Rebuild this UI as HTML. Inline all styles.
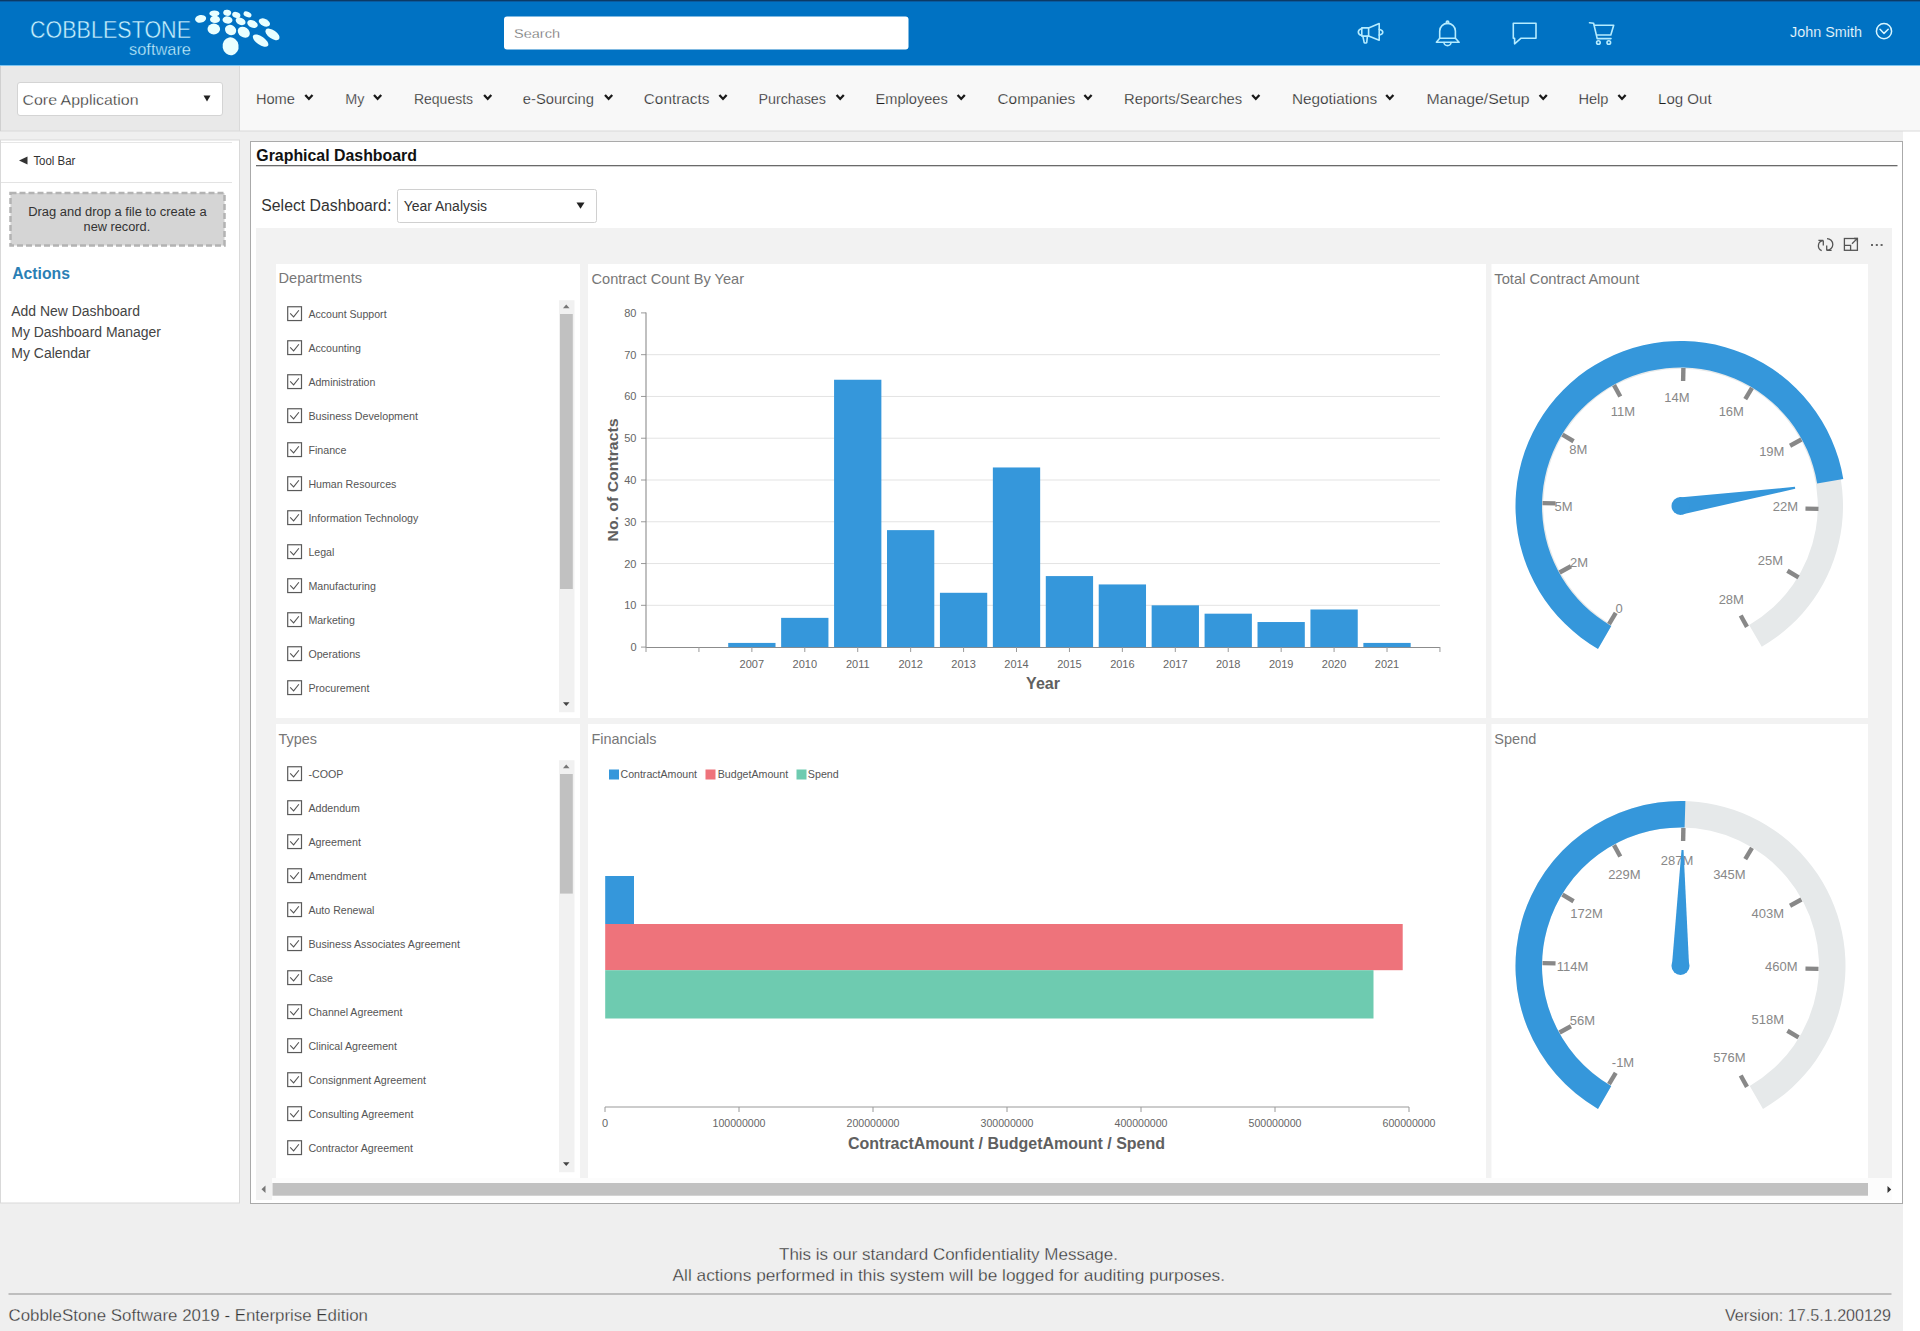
<!DOCTYPE html>
<html><head><meta charset="utf-8"><title>Graphical Dashboard</title>
<style>
html,body{margin:0;padding:0;width:1920px;height:1331px;overflow:hidden;background:#fff;}
svg{position:absolute;left:0;top:0;display:block;font-family:"Liberation Sans",sans-serif;}
</style></head><body>
<svg width="1920" height="1331" viewBox="0 0 1920 1331">
<rect x="0" y="0" width="1920" height="1331" fill="#ffffff"/>
<rect x="0" y="66" width="1903" height="1265" fill="#efefef"/>
<rect x="0" y="0" width="1920" height="66" fill="#0072c3"/>
<rect x="0" y="0" width="1920" height="1" fill="#0b3a66"/>
<rect x="0" y="1" width="1920" height="1" fill="#0a5a9e"/>
<rect x="0" y="65" width="1920" height="1" fill="#7cc4f0"/>
<text x="30" y="37.5" font-size="23.5" fill="#c9f3ff" textLength="161" lengthAdjust="spacingAndGlyphs" stroke="#0072c3" stroke-width="0.45">COBBLESTONE</text>
<text x="129" y="55" font-size="17" fill="#c9f3ff" textLength="62" lengthAdjust="spacingAndGlyphs" stroke="#0072c3" stroke-width="0.35">software</text>
<ellipse cx="200.6" cy="18.8" rx="5.6" ry="3.8" fill="#e9ffff" transform="rotate(-10 200.6 18.8)"/>
<ellipse cx="214.4" cy="13.4" rx="5.0" ry="3.0" fill="#e9ffff" transform="rotate(0 214.4 13.4)"/>
<ellipse cx="215.0" cy="19.4" rx="5.0" ry="3.6" fill="#e9ffff" transform="rotate(0 215.0 19.4)"/>
<ellipse cx="213.8" cy="29.0" rx="6.3" ry="5.4" fill="#e9ffff" transform="rotate(0 213.8 29.0)"/>
<ellipse cx="227.2" cy="12.8" rx="4.0" ry="3.0" fill="#e9ffff" transform="rotate(10 227.2 12.8)"/>
<ellipse cx="227.5" cy="20.0" rx="5.0" ry="3.6" fill="#e9ffff" transform="rotate(10 227.5 20.0)"/>
<ellipse cx="230.6" cy="30.0" rx="5.8" ry="5.0" fill="#e9ffff" transform="rotate(30 230.6 30.0)"/>
<ellipse cx="230.6" cy="46.3" rx="8.0" ry="9.0" fill="#e9ffff" transform="rotate(-10 230.6 46.3)"/>
<ellipse cx="236.3" cy="15.0" rx="4.2" ry="3.0" fill="#e9ffff" transform="rotate(20 236.3 15.0)"/>
<ellipse cx="240.6" cy="21.3" rx="5.2" ry="3.5" fill="#e9ffff" transform="rotate(25 240.6 21.3)"/>
<ellipse cx="243.8" cy="32.2" rx="6.5" ry="5.0" fill="#e9ffff" transform="rotate(35 243.8 32.2)"/>
<ellipse cx="247.5" cy="14.4" rx="4.2" ry="2.6" fill="#e9ffff" transform="rotate(25 247.5 14.4)"/>
<ellipse cx="252.5" cy="24.0" rx="5.5" ry="3.6" fill="#e9ffff" transform="rotate(25 252.5 24.0)"/>
<ellipse cx="260.6" cy="40.6" rx="9.0" ry="4.2" fill="#e9ffff" transform="rotate(35 260.6 40.6)"/>
<ellipse cx="264.4" cy="22.5" rx="6.0" ry="3.6" fill="#e9ffff" transform="rotate(25 264.4 22.5)"/>
<ellipse cx="272.5" cy="34.4" rx="8.2" ry="4.2" fill="#e9ffff" transform="rotate(35 272.5 34.4)"/>
<rect x="504" y="16.5" width="404.5" height="33" rx="3" fill="#ffffff"/>
<text x="514" y="38" font-size="13" fill="#5e5e5e" textLength="46" lengthAdjust="spacingAndGlyphs" stroke="#ffffff" stroke-width="0.3">Search</text>
<g fill="none" stroke="#b5ecff" stroke-width="1.6" stroke-linejoin="round" stroke-linecap="round"><path d="M1368.6 27.9 L1379.2 23.6 L1379.2 40.3 L1368.6 36.1 Z"/><path d="M1368.6 27.9 L1361.8 27.9 L1361.8 36.1 L1368.6 36.1"/><path d="M1361.8 28.4 Q1358.3 29.5 1358.3 32 Q1358.3 34.6 1361.8 35.6"/><path d="M1379.2 29.3 Q1382.8 30.3 1382.8 32.2 Q1382.8 34.2 1379.2 35"/><path d="M1362.9 36.3 L1364.2 42.6 Q1365.4 43.5 1366.7 42.6 L1367.4 36.3"/><path d="M1439.7 38.3 L1439.7 31 A7.85 7.6 0 0 1 1455.4 31 L1455.4 38.3"/><path d="M1439.7 38.3 L1455.4 38.3 L1459.1 42.3 L1436.4 42.3 Z"/><path d="M1444 42.5 A3.5 3.1 0 0 0 1451 42.5"/><circle cx="1447.5" cy="22.3" r="1.2"/><path d="M1513.3 23.3 L1536 23.3 L1536 38.3 L1520.8 38.3 L1514.6 43.8 L1514.6 38.3 L1513.3 38.3 Z"/><path d="M1589.5 22.8 L1593.6 23.2 L1597.2 38.6 L1611 38.6"/><path d="M1594.6 25.2 L1613.7 25.2 L1610.8 35 L1596.8 35"/><circle cx="1598.4" cy="42.5" r="1.8"/><circle cx="1608.8" cy="42.5" r="1.8"/><circle cx="1884" cy="31.2" r="7.6" stroke="#d8f6ff" stroke-width="1.5"/><path d="M1880 29.2 L1884 33.4 L1888.2 29.2" stroke="#d8f6ff" stroke-width="1.5"/></g>
<text x="1790" y="36.6" font-size="14" fill="#f0fcff" textLength="72" lengthAdjust="spacingAndGlyphs" stroke="#0072c3" stroke-width="0.15">John Smith</text>
<rect x="0" y="66" width="1920" height="65" fill="#f8f8f8"/>
<rect x="0" y="66" width="239.5" height="65" fill="#e9e9e9"/>
<rect x="239" y="66" width="1" height="65" fill="#dadada"/>
<rect x="0" y="130.5" width="1920" height="1" fill="#d9d9d9"/>
<rect x="0" y="66" width="1" height="65" fill="#d0d0d0"/>
<rect x="17.5" y="82.5" width="205" height="33" rx="2.5" fill="#ffffff" stroke="#d4d4d4" stroke-width="1"/>
<text x="22.5" y="104.5" font-size="15" fill="#2a2a2a" textLength="116" lengthAdjust="spacingAndGlyphs" stroke="#ffffff" stroke-width="0.3">Core Application</text>
<path d="M203.5 95.5 L210.5 95.5 L207 101.5 Z" fill="#222"/>
<text x="255.9" y="103.8" font-size="14" fill="#1e1e1e" textLength="39.0" lengthAdjust="spacingAndGlyphs" stroke="#f8f8f8" stroke-width="0.25">Home</text>
<path d="M305.3 94.9 L308.9 98.9 L312.5 94.9" fill="none" stroke="#1a1a1a" stroke-width="2.3"/>
<text x="345.3" y="103.8" font-size="14" fill="#1e1e1e" textLength="19.2" lengthAdjust="spacingAndGlyphs" stroke="#f8f8f8" stroke-width="0.25">My</text>
<path d="M374.0 94.9 L377.59999999999997 98.9 L381.2 94.9" fill="none" stroke="#1a1a1a" stroke-width="2.3"/>
<text x="414.0" y="103.8" font-size="14" fill="#1e1e1e" textLength="59.0" lengthAdjust="spacingAndGlyphs" stroke="#f8f8f8" stroke-width="0.25">Requests</text>
<path d="M484.1 94.9 L487.7 98.9 L491.3 94.9" fill="none" stroke="#1a1a1a" stroke-width="2.3"/>
<text x="522.8" y="103.8" font-size="14" fill="#1e1e1e" textLength="71.2" lengthAdjust="spacingAndGlyphs" stroke="#f8f8f8" stroke-width="0.25">e-Sourcing</text>
<path d="M605.0 94.9 L608.6 98.9 L612.1999999999999 94.9" fill="none" stroke="#1a1a1a" stroke-width="2.3"/>
<text x="643.8" y="103.8" font-size="14" fill="#1e1e1e" textLength="65.6" lengthAdjust="spacingAndGlyphs" stroke="#f8f8f8" stroke-width="0.25">Contracts</text>
<path d="M719.4 94.9 L723.0 98.9 L726.5999999999999 94.9" fill="none" stroke="#1a1a1a" stroke-width="2.3"/>
<text x="758.4" y="103.8" font-size="14" fill="#1e1e1e" textLength="67.6" lengthAdjust="spacingAndGlyphs" stroke="#f8f8f8" stroke-width="0.25">Purchases</text>
<path d="M836.6 94.9 L840.2 98.9 L843.8 94.9" fill="none" stroke="#1a1a1a" stroke-width="2.3"/>
<text x="875.6" y="103.8" font-size="14" fill="#1e1e1e" textLength="72.2" lengthAdjust="spacingAndGlyphs" stroke="#f8f8f8" stroke-width="0.25">Employees</text>
<path d="M957.6 94.9 L961.2 98.9 L964.8 94.9" fill="none" stroke="#1a1a1a" stroke-width="2.3"/>
<text x="997.5" y="103.8" font-size="14" fill="#1e1e1e" textLength="77.8" lengthAdjust="spacingAndGlyphs" stroke="#f8f8f8" stroke-width="0.25">Companies</text>
<path d="M1084.3999999999999 94.9 L1088.0 98.9 L1091.6 94.9" fill="none" stroke="#1a1a1a" stroke-width="2.3"/>
<text x="1124.0" y="103.8" font-size="14" fill="#1e1e1e" textLength="118.2" lengthAdjust="spacingAndGlyphs" stroke="#f8f8f8" stroke-width="0.25">Reports/Searches</text>
<path d="M1252.1999999999998 94.9 L1255.8 98.9 L1259.3999999999999 94.9" fill="none" stroke="#1a1a1a" stroke-width="2.3"/>
<text x="1291.9" y="103.8" font-size="14" fill="#1e1e1e" textLength="85.3" lengthAdjust="spacingAndGlyphs" stroke="#f8f8f8" stroke-width="0.25">Negotiations</text>
<path d="M1386.1999999999998 94.9 L1389.8 98.9 L1393.3999999999999 94.9" fill="none" stroke="#1a1a1a" stroke-width="2.3"/>
<text x="1426.6" y="103.8" font-size="14" fill="#1e1e1e" textLength="103.1" lengthAdjust="spacingAndGlyphs" stroke="#f8f8f8" stroke-width="0.25">Manage/Setup</text>
<path d="M1539.6 94.9 L1543.2 98.9 L1546.8 94.9" fill="none" stroke="#1a1a1a" stroke-width="2.3"/>
<text x="1578.4" y="103.8" font-size="14" fill="#1e1e1e" textLength="30.0" lengthAdjust="spacingAndGlyphs" stroke="#f8f8f8" stroke-width="0.25">Help</text>
<path d="M1618.3999999999999 94.9 L1622.0 98.9 L1625.6 94.9" fill="none" stroke="#1a1a1a" stroke-width="2.3"/>
<text x="1658.0" y="103.8" font-size="14" fill="#1e1e1e" textLength="53.6" lengthAdjust="spacingAndGlyphs" stroke="#f8f8f8" stroke-width="0.25">Log Out</text>
<rect x="0.5" y="140" width="239" height="1063" fill="#ffffff" stroke="#d9d9d9" stroke-width="1"/>
<rect x="1" y="142" width="231" height="1" fill="#e6e6e6"/>
<rect x="1" y="182" width="231" height="1" fill="#e3e3e3"/>
<path d="M19 160.5 L27.5 156.5 L27.5 164.5 Z" fill="#333"/>
<text x="33.4" y="165" font-size="12" fill="#333333" textLength="42" lengthAdjust="spacingAndGlyphs">Tool Bar</text>
<rect x="10.5" y="193" width="214" height="52.5" fill="#d5d5d5" stroke="#b3b3b3" stroke-width="2.5" stroke-dasharray="6 3"/>
<text x="28.2" y="216" font-size="12" fill="#333333" textLength="178.4" lengthAdjust="spacingAndGlyphs">Drag and drop a file to create a</text>
<text x="83.6" y="230.6" font-size="12" fill="#333333" textLength="66.6" lengthAdjust="spacingAndGlyphs">new record.</text>
<text x="12.2" y="279.3" font-size="16" fill="#2b7fb5" font-weight="bold" textLength="57.7" lengthAdjust="spacingAndGlyphs">Actions</text>
<text x="11.3" y="315.9" font-size="14" fill="#444444" textLength="128.7" lengthAdjust="spacingAndGlyphs">Add New Dashboard</text>
<text x="11.3" y="336.9" font-size="14" fill="#444444" textLength="149.7" lengthAdjust="spacingAndGlyphs">My Dashboard Manager</text>
<text x="11.3" y="357.9" font-size="14" fill="#444444" textLength="79.2" lengthAdjust="spacingAndGlyphs">My Calendar</text>
<rect x="250.5" y="141.5" width="1652" height="1062" fill="#ffffff" stroke="#aaaaaa" stroke-width="1"/>
<text x="256.3" y="161.3" font-size="16" fill="#111111" font-weight="bold" textLength="160.7" lengthAdjust="spacingAndGlyphs">Graphical Dashboard</text>
<rect x="256" y="165" width="1641.5" height="1.3" fill="#6a6a6a"/>
<text x="261.3" y="210.5" font-size="16" fill="#333333" textLength="130" lengthAdjust="spacingAndGlyphs">Select Dashboard:</text>
<rect x="397.5" y="189.5" width="199" height="33" rx="2" fill="#ffffff" stroke="#d0d0d0" stroke-width="1"/>
<text x="403.8" y="211.3" font-size="14" fill="#333333" textLength="83.2" lengthAdjust="spacingAndGlyphs">Year Analysis</text>
<path d="M576.5 202.5 L584.5 202.5 L580.5 208.8 Z" fill="#222"/>
<rect x="256" y="228" width="1636" height="972" fill="#f2f2f2"/>
<g fill="none" stroke="#555" stroke-width="1.3"><path d="M1823.3 240.4 L1818.4 240.4 M1823.3 240.4 L1823.3 245.4"/><path d="M1823.0 240.6 A5.2 5.2 0 0 0 1821.7 250.6"/><path d="M1826.7 250.4 L1831.6 250.4 M1826.7 250.4 L1826.7 245.4"/><path d="M1827.0 238.6 A5.2 5.2 0 0 1 1827.0 250.2"/><rect x="1844.4" y="238.5" width="13" height="11.8"/><path d="M1844.4 245.4 L1850.6 245.4 L1850.6 250.3"/><path d="M1852 243.8 L1857.2 238.6 M1854 238.5 L1857.4 238.5 L1857.4 241.8"/></g>
<rect x="1871" y="244" width="2" height="2" fill="#666"/>
<rect x="1875.8" y="244" width="2" height="2" fill="#666"/>
<rect x="1880.6" y="244" width="2" height="2" fill="#666"/>
<rect x="276" y="264" width="304" height="454" fill="#ffffff"/>
<rect x="588" y="264" width="898" height="454" fill="#ffffff"/>
<rect x="1491.5" y="264" width="376.5" height="454" fill="#ffffff"/>
<rect x="276" y="724" width="304" height="454" fill="#ffffff"/>
<rect x="588" y="724" width="898" height="454" fill="#ffffff"/>
<rect x="1491.5" y="724" width="376.5" height="454" fill="#ffffff"/>
<text x="278.5" y="282.7" font-size="15" fill="#777777" textLength="83.5" lengthAdjust="spacingAndGlyphs">Departments</text>
<text x="591.5" y="283.5" font-size="15" fill="#777777" textLength="152.5" lengthAdjust="spacingAndGlyphs">Contract Count By Year</text>
<text x="1494.3" y="283.5" font-size="15" fill="#777777" textLength="145" lengthAdjust="spacingAndGlyphs">Total Contract Amount</text>
<text x="278.5" y="743.5" font-size="15" fill="#777777" textLength="38.5" lengthAdjust="spacingAndGlyphs">Types</text>
<text x="591.5" y="743.7" font-size="15" fill="#777777" textLength="65" lengthAdjust="spacingAndGlyphs">Financials</text>
<text x="1494.3" y="743.7" font-size="15" fill="#777777" textLength="42" lengthAdjust="spacingAndGlyphs">Spend</text>
<rect x="287.7" y="306.75" width="13.8" height="13.8" fill="#fff" stroke="#5a5a5a" stroke-width="1.2"/>
<path d="M290.2 313.45 L293.6 316.85 L298.9 310.25" fill="none" stroke="#555" stroke-width="1.1"/>
<text x="308.4" y="317.85" font-size="11" fill="#555555" textLength="78.2" lengthAdjust="spacingAndGlyphs">Account Support</text>
<rect x="287.7" y="340.75" width="13.8" height="13.8" fill="#fff" stroke="#5a5a5a" stroke-width="1.2"/>
<path d="M290.2 347.45 L293.6 350.85 L298.9 344.25" fill="none" stroke="#555" stroke-width="1.1"/>
<text x="308.4" y="351.85" font-size="11" fill="#555555" textLength="52.5" lengthAdjust="spacingAndGlyphs">Accounting</text>
<rect x="287.7" y="374.75" width="13.8" height="13.8" fill="#fff" stroke="#5a5a5a" stroke-width="1.2"/>
<path d="M290.2 381.45 L293.6 384.85 L298.9 378.25" fill="none" stroke="#555" stroke-width="1.1"/>
<text x="308.4" y="385.85" font-size="11" fill="#555555" textLength="67" lengthAdjust="spacingAndGlyphs">Administration</text>
<rect x="287.7" y="408.75" width="13.8" height="13.8" fill="#fff" stroke="#5a5a5a" stroke-width="1.2"/>
<path d="M290.2 415.45 L293.6 418.85 L298.9 412.25" fill="none" stroke="#555" stroke-width="1.1"/>
<text x="308.4" y="419.85" font-size="11" fill="#555555" textLength="109.5" lengthAdjust="spacingAndGlyphs">Business Development</text>
<rect x="287.7" y="442.75" width="13.8" height="13.8" fill="#fff" stroke="#5a5a5a" stroke-width="1.2"/>
<path d="M290.2 449.45 L293.6 452.85 L298.9 446.25" fill="none" stroke="#555" stroke-width="1.1"/>
<text x="308.4" y="453.85" font-size="11" fill="#555555" textLength="38" lengthAdjust="spacingAndGlyphs">Finance</text>
<rect x="287.7" y="476.75" width="13.8" height="13.8" fill="#fff" stroke="#5a5a5a" stroke-width="1.2"/>
<path d="M290.2 483.45 L293.6 486.85 L298.9 480.25" fill="none" stroke="#555" stroke-width="1.1"/>
<text x="308.4" y="487.85" font-size="11" fill="#555555" textLength="88" lengthAdjust="spacingAndGlyphs">Human Resources</text>
<rect x="287.7" y="510.75" width="13.8" height="13.8" fill="#fff" stroke="#5a5a5a" stroke-width="1.2"/>
<path d="M290.2 517.45 L293.6 520.85 L298.9 514.25" fill="none" stroke="#555" stroke-width="1.1"/>
<text x="308.4" y="521.85" font-size="11" fill="#555555" textLength="110" lengthAdjust="spacingAndGlyphs">Information Technology</text>
<rect x="287.7" y="544.75" width="13.8" height="13.8" fill="#fff" stroke="#5a5a5a" stroke-width="1.2"/>
<path d="M290.2 551.45 L293.6 554.85 L298.9 548.25" fill="none" stroke="#555" stroke-width="1.1"/>
<text x="308.4" y="555.85" font-size="11" fill="#555555" textLength="26" lengthAdjust="spacingAndGlyphs">Legal</text>
<rect x="287.7" y="578.75" width="13.8" height="13.8" fill="#fff" stroke="#5a5a5a" stroke-width="1.2"/>
<path d="M290.2 585.45 L293.6 588.85 L298.9 582.25" fill="none" stroke="#555" stroke-width="1.1"/>
<text x="308.4" y="589.85" font-size="11" fill="#555555" textLength="67.5" lengthAdjust="spacingAndGlyphs">Manufacturing</text>
<rect x="287.7" y="612.75" width="13.8" height="13.8" fill="#fff" stroke="#5a5a5a" stroke-width="1.2"/>
<path d="M290.2 619.45 L293.6 622.85 L298.9 616.25" fill="none" stroke="#555" stroke-width="1.1"/>
<text x="308.4" y="623.85" font-size="11" fill="#555555" textLength="46.5" lengthAdjust="spacingAndGlyphs">Marketing</text>
<rect x="287.7" y="646.75" width="13.8" height="13.8" fill="#fff" stroke="#5a5a5a" stroke-width="1.2"/>
<path d="M290.2 653.45 L293.6 656.85 L298.9 650.25" fill="none" stroke="#555" stroke-width="1.1"/>
<text x="308.4" y="657.85" font-size="11" fill="#555555" textLength="52" lengthAdjust="spacingAndGlyphs">Operations</text>
<rect x="287.7" y="680.75" width="13.8" height="13.8" fill="#fff" stroke="#5a5a5a" stroke-width="1.2"/>
<path d="M290.2 687.45 L293.6 690.85 L298.9 684.25" fill="none" stroke="#555" stroke-width="1.1"/>
<text x="308.4" y="691.85" font-size="11" fill="#555555" textLength="61" lengthAdjust="spacingAndGlyphs">Procurement</text>
<rect x="559" y="300.25" width="15.5" height="412" fill="#f1f1f1"/>
<path d="M563 308.25 L569.5 308.25 L566.25 304.45 Z" fill="#777"/>
<path d="M563 702.25 L569.5 702.25 L566.25 706.05 Z" fill="#444"/>
<rect x="560" y="314" width="12.8" height="275" fill="#c1c1c1"/>
<rect x="287.7" y="766.75" width="13.8" height="13.8" fill="#fff" stroke="#5a5a5a" stroke-width="1.2"/>
<path d="M290.2 773.45 L293.6 776.85 L298.9 770.25" fill="none" stroke="#555" stroke-width="1.1"/>
<text x="308.4" y="777.85" font-size="11" fill="#555555" textLength="35" lengthAdjust="spacingAndGlyphs">-COOP</text>
<rect x="287.7" y="800.75" width="13.8" height="13.8" fill="#fff" stroke="#5a5a5a" stroke-width="1.2"/>
<path d="M290.2 807.45 L293.6 810.85 L298.9 804.25" fill="none" stroke="#555" stroke-width="1.1"/>
<text x="308.4" y="811.85" font-size="11" fill="#555555" textLength="51.5" lengthAdjust="spacingAndGlyphs">Addendum</text>
<rect x="287.7" y="834.75" width="13.8" height="13.8" fill="#fff" stroke="#5a5a5a" stroke-width="1.2"/>
<path d="M290.2 841.45 L293.6 844.85 L298.9 838.25" fill="none" stroke="#555" stroke-width="1.1"/>
<text x="308.4" y="845.85" font-size="11" fill="#555555" textLength="52.5" lengthAdjust="spacingAndGlyphs">Agreement</text>
<rect x="287.7" y="868.75" width="13.8" height="13.8" fill="#fff" stroke="#5a5a5a" stroke-width="1.2"/>
<path d="M290.2 875.45 L293.6 878.85 L298.9 872.25" fill="none" stroke="#555" stroke-width="1.1"/>
<text x="308.4" y="879.85" font-size="11" fill="#555555" textLength="58" lengthAdjust="spacingAndGlyphs">Amendment</text>
<rect x="287.7" y="902.75" width="13.8" height="13.8" fill="#fff" stroke="#5a5a5a" stroke-width="1.2"/>
<path d="M290.2 909.45 L293.6 912.85 L298.9 906.25" fill="none" stroke="#555" stroke-width="1.1"/>
<text x="308.4" y="913.85" font-size="11" fill="#555555" textLength="66" lengthAdjust="spacingAndGlyphs">Auto Renewal</text>
<rect x="287.7" y="936.75" width="13.8" height="13.8" fill="#fff" stroke="#5a5a5a" stroke-width="1.2"/>
<path d="M290.2 943.45 L293.6 946.85 L298.9 940.25" fill="none" stroke="#555" stroke-width="1.1"/>
<text x="308.4" y="947.85" font-size="11" fill="#555555" textLength="151.5" lengthAdjust="spacingAndGlyphs">Business Associates Agreement</text>
<rect x="287.7" y="970.75" width="13.8" height="13.8" fill="#fff" stroke="#5a5a5a" stroke-width="1.2"/>
<path d="M290.2 977.45 L293.6 980.85 L298.9 974.25" fill="none" stroke="#555" stroke-width="1.1"/>
<text x="308.4" y="981.85" font-size="11" fill="#555555" textLength="24.5" lengthAdjust="spacingAndGlyphs">Case</text>
<rect x="287.7" y="1004.75" width="13.8" height="13.8" fill="#fff" stroke="#5a5a5a" stroke-width="1.2"/>
<path d="M290.2 1011.45 L293.6 1014.85 L298.9 1008.25" fill="none" stroke="#555" stroke-width="1.1"/>
<text x="308.4" y="1015.85" font-size="11" fill="#555555" textLength="94" lengthAdjust="spacingAndGlyphs">Channel Agreement</text>
<rect x="287.7" y="1038.75" width="13.8" height="13.8" fill="#fff" stroke="#5a5a5a" stroke-width="1.2"/>
<path d="M290.2 1045.45 L293.6 1048.85 L298.9 1042.25" fill="none" stroke="#555" stroke-width="1.1"/>
<text x="308.4" y="1049.85" font-size="11" fill="#555555" textLength="88.5" lengthAdjust="spacingAndGlyphs">Clinical Agreement</text>
<rect x="287.7" y="1072.75" width="13.8" height="13.8" fill="#fff" stroke="#5a5a5a" stroke-width="1.2"/>
<path d="M290.2 1079.45 L293.6 1082.85 L298.9 1076.25" fill="none" stroke="#555" stroke-width="1.1"/>
<text x="308.4" y="1083.85" font-size="11" fill="#555555" textLength="117.5" lengthAdjust="spacingAndGlyphs">Consignment Agreement</text>
<rect x="287.7" y="1106.75" width="13.8" height="13.8" fill="#fff" stroke="#5a5a5a" stroke-width="1.2"/>
<path d="M290.2 1113.45 L293.6 1116.85 L298.9 1110.25" fill="none" stroke="#555" stroke-width="1.1"/>
<text x="308.4" y="1117.85" font-size="11" fill="#555555" textLength="105" lengthAdjust="spacingAndGlyphs">Consulting Agreement</text>
<rect x="287.7" y="1140.75" width="13.8" height="13.8" fill="#fff" stroke="#5a5a5a" stroke-width="1.2"/>
<path d="M290.2 1147.45 L293.6 1150.85 L298.9 1144.25" fill="none" stroke="#555" stroke-width="1.1"/>
<text x="308.4" y="1151.85" font-size="11" fill="#555555" textLength="104.5" lengthAdjust="spacingAndGlyphs">Contractor Agreement</text>
<rect x="559" y="760.25" width="15.5" height="412" fill="#f1f1f1"/>
<path d="M563 768.25 L569.5 768.25 L566.25 764.45 Z" fill="#777"/>
<path d="M563 1162.25 L569.5 1162.25 L566.25 1166.05 Z" fill="#444"/>
<rect x="560" y="774" width="12.8" height="119.60000000000002" fill="#c1c1c1"/>
<line x1="646" y1="605.325" x2="1440" y2="605.325" stroke="#e3e3e3" stroke-width="1"/>
<line x1="646" y1="563.55" x2="1440" y2="563.55" stroke="#e3e3e3" stroke-width="1"/>
<line x1="646" y1="521.775" x2="1440" y2="521.775" stroke="#e3e3e3" stroke-width="1"/>
<line x1="646" y1="480.0" x2="1440" y2="480.0" stroke="#e3e3e3" stroke-width="1"/>
<line x1="646" y1="438.225" x2="1440" y2="438.225" stroke="#e3e3e3" stroke-width="1"/>
<line x1="646" y1="396.45000000000005" x2="1440" y2="396.45000000000005" stroke="#e3e3e3" stroke-width="1"/>
<line x1="646" y1="354.675" x2="1440" y2="354.675" stroke="#e3e3e3" stroke-width="1"/>
<line x1="641" y1="647.1" x2="646" y2="647.1" stroke="#9a9a9a" stroke-width="1"/>
<text x="636.5" y="651.1" font-size="11" fill="#666666" text-anchor="end">0</text>
<line x1="641" y1="605.325" x2="646" y2="605.325" stroke="#9a9a9a" stroke-width="1"/>
<text x="636.5" y="609.325" font-size="11" fill="#666666" text-anchor="end">10</text>
<line x1="641" y1="563.55" x2="646" y2="563.55" stroke="#9a9a9a" stroke-width="1"/>
<text x="636.5" y="567.55" font-size="11" fill="#666666" text-anchor="end">20</text>
<line x1="641" y1="521.775" x2="646" y2="521.775" stroke="#9a9a9a" stroke-width="1"/>
<text x="636.5" y="525.775" font-size="11" fill="#666666" text-anchor="end">30</text>
<line x1="641" y1="480.0" x2="646" y2="480.0" stroke="#9a9a9a" stroke-width="1"/>
<text x="636.5" y="484.0" font-size="11" fill="#666666" text-anchor="end">40</text>
<line x1="641" y1="438.225" x2="646" y2="438.225" stroke="#9a9a9a" stroke-width="1"/>
<text x="636.5" y="442.225" font-size="11" fill="#666666" text-anchor="end">50</text>
<line x1="641" y1="396.45000000000005" x2="646" y2="396.45000000000005" stroke="#9a9a9a" stroke-width="1"/>
<text x="636.5" y="400.45000000000005" font-size="11" fill="#666666" text-anchor="end">60</text>
<line x1="641" y1="354.675" x2="646" y2="354.675" stroke="#9a9a9a" stroke-width="1"/>
<text x="636.5" y="358.675" font-size="11" fill="#666666" text-anchor="end">70</text>
<line x1="641" y1="312.9" x2="646" y2="312.9" stroke="#9a9a9a" stroke-width="1"/>
<text x="636.5" y="316.9" font-size="11" fill="#666666" text-anchor="end">80</text>
<line x1="646" y1="312.5" x2="646" y2="647.5" stroke="#8c8c8c" stroke-width="1.1"/>
<line x1="646" y1="647.5" x2="1440" y2="647.5" stroke="#8c8c8c" stroke-width="1.1"/>
<line x1="646.0" y1="647" x2="646.0" y2="652" stroke="#9a9a9a" stroke-width="1"/>
<line x1="698.93" y1="647" x2="698.93" y2="652" stroke="#9a9a9a" stroke-width="1"/>
<line x1="751.86" y1="647" x2="751.86" y2="652" stroke="#9a9a9a" stroke-width="1"/>
<line x1="804.79" y1="647" x2="804.79" y2="652" stroke="#9a9a9a" stroke-width="1"/>
<line x1="857.72" y1="647" x2="857.72" y2="652" stroke="#9a9a9a" stroke-width="1"/>
<line x1="910.65" y1="647" x2="910.65" y2="652" stroke="#9a9a9a" stroke-width="1"/>
<line x1="963.5799999999999" y1="647" x2="963.5799999999999" y2="652" stroke="#9a9a9a" stroke-width="1"/>
<line x1="1016.51" y1="647" x2="1016.51" y2="652" stroke="#9a9a9a" stroke-width="1"/>
<line x1="1069.44" y1="647" x2="1069.44" y2="652" stroke="#9a9a9a" stroke-width="1"/>
<line x1="1122.37" y1="647" x2="1122.37" y2="652" stroke="#9a9a9a" stroke-width="1"/>
<line x1="1175.3" y1="647" x2="1175.3" y2="652" stroke="#9a9a9a" stroke-width="1"/>
<line x1="1228.23" y1="647" x2="1228.23" y2="652" stroke="#9a9a9a" stroke-width="1"/>
<line x1="1281.1599999999999" y1="647" x2="1281.1599999999999" y2="652" stroke="#9a9a9a" stroke-width="1"/>
<line x1="1334.0900000000001" y1="647" x2="1334.0900000000001" y2="652" stroke="#9a9a9a" stroke-width="1"/>
<line x1="1387.02" y1="647" x2="1387.02" y2="652" stroke="#9a9a9a" stroke-width="1"/>
<line x1="1439.95" y1="647" x2="1439.95" y2="652" stroke="#9a9a9a" stroke-width="1"/>
<rect x="728.21" y="642.92" width="47.3" height="4.18" fill="#3597db"/>
<text x="751.86" y="667.5" font-size="11" fill="#666666" text-anchor="middle">2007</text>
<rect x="781.14" y="617.86" width="47.3" height="29.24" fill="#3597db"/>
<text x="804.79" y="667.5" font-size="11" fill="#666666" text-anchor="middle">2010</text>
<rect x="834.07" y="379.74" width="47.3" height="267.36" fill="#3597db"/>
<text x="857.72" y="667.5" font-size="11" fill="#666666" text-anchor="middle">2011</text>
<rect x="887.0" y="530.13" width="47.3" height="116.97" fill="#3597db"/>
<text x="910.65" y="667.5" font-size="11" fill="#666666" text-anchor="middle">2012</text>
<rect x="939.93" y="592.79" width="47.3" height="54.31" fill="#3597db"/>
<text x="963.5799999999999" y="667.5" font-size="11" fill="#666666" text-anchor="middle">2013</text>
<rect x="992.86" y="467.47" width="47.3" height="179.63" fill="#3597db"/>
<text x="1016.51" y="667.5" font-size="11" fill="#666666" text-anchor="middle">2014</text>
<rect x="1045.79" y="576.08" width="47.3" height="71.02" fill="#3597db"/>
<text x="1069.44" y="667.5" font-size="11" fill="#666666" text-anchor="middle">2015</text>
<rect x="1098.72" y="584.44" width="47.3" height="62.66" fill="#3597db"/>
<text x="1122.37" y="667.5" font-size="11" fill="#666666" text-anchor="middle">2016</text>
<rect x="1151.65" y="605.33" width="47.3" height="41.77" fill="#3597db"/>
<text x="1175.3" y="667.5" font-size="11" fill="#666666" text-anchor="middle">2017</text>
<rect x="1204.58" y="613.68" width="47.3" height="33.42" fill="#3597db"/>
<text x="1228.23" y="667.5" font-size="11" fill="#666666" text-anchor="middle">2018</text>
<rect x="1257.51" y="622.03" width="47.3" height="25.07" fill="#3597db"/>
<text x="1281.1599999999999" y="667.5" font-size="11" fill="#666666" text-anchor="middle">2019</text>
<rect x="1310.44" y="609.5" width="47.3" height="37.6" fill="#3597db"/>
<text x="1334.0900000000001" y="667.5" font-size="11" fill="#666666" text-anchor="middle">2020</text>
<rect x="1363.37" y="642.92" width="47.3" height="4.18" fill="#3597db"/>
<text x="1387.02" y="667.5" font-size="11" fill="#666666" text-anchor="middle">2021</text>
<text x="1043" y="689" font-size="16" fill="#606060" font-weight="bold" text-anchor="middle">Year</text>
<text transform="translate(618 480) rotate(-90)" font-size="15.5" font-weight="bold" fill="#606060" text-anchor="middle" textLength="123" lengthAdjust="spacingAndGlyphs">No. of Contracts</text>
<rect x="609" y="769.5" width="10" height="10" fill="#3597db"/>
<text x="620.5" y="778" font-size="11" fill="#555555" textLength="76.5" lengthAdjust="spacingAndGlyphs">ContractAmount</text>
<rect x="705.5" y="769.5" width="10" height="10" fill="#ee737b"/>
<text x="717.7" y="778" font-size="11" fill="#555555" textLength="70.5" lengthAdjust="spacingAndGlyphs">BudgetAmount</text>
<rect x="796.5" y="769.5" width="10" height="10" fill="#6ecbb0"/>
<text x="807.8" y="778" font-size="11" fill="#555555" textLength="31" lengthAdjust="spacingAndGlyphs">Spend</text>
<rect x="605.2" y="876" width="28.8" height="48" fill="#3597db"/>
<rect x="605.2" y="924" width="797.5" height="46.2" fill="#ee737b"/>
<rect x="605.2" y="970.2" width="768.3" height="48.3" fill="#6ecbb0"/>
<line x1="605" y1="1107" x2="1409" y2="1107" stroke="#9a9a9a" stroke-width="1.2"/>
<line x1="605" y1="1107" x2="605" y2="1112" stroke="#9a9a9a" stroke-width="1"/>
<text x="605" y="1127" font-size="11" fill="#666666" text-anchor="middle">0</text>
<line x1="739" y1="1107" x2="739" y2="1112" stroke="#9a9a9a" stroke-width="1"/>
<text x="739" y="1127" font-size="11" fill="#666666" text-anchor="middle" textLength="53" lengthAdjust="spacingAndGlyphs">100000000</text>
<line x1="873" y1="1107" x2="873" y2="1112" stroke="#9a9a9a" stroke-width="1"/>
<text x="873" y="1127" font-size="11" fill="#666666" text-anchor="middle" textLength="53" lengthAdjust="spacingAndGlyphs">200000000</text>
<line x1="1007" y1="1107" x2="1007" y2="1112" stroke="#9a9a9a" stroke-width="1"/>
<text x="1007" y="1127" font-size="11" fill="#666666" text-anchor="middle" textLength="53" lengthAdjust="spacingAndGlyphs">300000000</text>
<line x1="1141" y1="1107" x2="1141" y2="1112" stroke="#9a9a9a" stroke-width="1"/>
<text x="1141" y="1127" font-size="11" fill="#666666" text-anchor="middle" textLength="53" lengthAdjust="spacingAndGlyphs">400000000</text>
<line x1="1275" y1="1107" x2="1275" y2="1112" stroke="#9a9a9a" stroke-width="1"/>
<text x="1275" y="1127" font-size="11" fill="#666666" text-anchor="middle" textLength="53" lengthAdjust="spacingAndGlyphs">500000000</text>
<line x1="1409" y1="1107" x2="1409" y2="1112" stroke="#9a9a9a" stroke-width="1"/>
<text x="1409" y="1127" font-size="11" fill="#666666" text-anchor="middle" textLength="53" lengthAdjust="spacingAndGlyphs">600000000</text>
<text x="1006.5" y="1149" font-size="16" fill="#606060" font-weight="bold" text-anchor="middle" textLength="317" lengthAdjust="spacingAndGlyphs">ContractAmount / BudgetAmount / Spend</text>
<path d="M1599.25 646.73 A162.5 162.5 0 1 1 1761.75 646.73 L1749.15 624.91 A137.3 137.3 0 1 0 1611.85 624.91 Z" fill="#e6e9ea"/>
<path d="M1598.00 648.89 A165 165 0 1 1 1843.28 479.05 L1817.14 483.38 A138.5 138.5 0 1 0 1611.25 625.94 Z" fill="#3597db"/>
<line x1="1609.01" y1="624.04" x2="1615.75" y2="612.92" stroke="#888888" stroke-width="4.4"/>
<line x1="1559.57" y1="572.48" x2="1570.96" y2="566.22" stroke="#888888" stroke-width="4.4"/>
<line x1="1542.53" y1="503.11" x2="1555.53" y2="503.38" stroke="#888888" stroke-width="4.4"/>
<line x1="1562.46" y1="434.51" x2="1573.58" y2="441.25" stroke="#888888" stroke-width="4.4"/>
<line x1="1614.02" y1="385.07" x2="1620.28" y2="396.46" stroke="#888888" stroke-width="4.4"/>
<line x1="1683.39" y1="368.03" x2="1683.12" y2="381.03" stroke="#888888" stroke-width="4.4"/>
<line x1="1751.99" y1="387.96" x2="1745.25" y2="399.08" stroke="#888888" stroke-width="4.4"/>
<line x1="1801.43" y1="439.52" x2="1790.04" y2="445.78" stroke="#888888" stroke-width="4.4"/>
<line x1="1818.47" y1="508.89" x2="1805.47" y2="508.62" stroke="#888888" stroke-width="4.4"/>
<line x1="1798.54" y1="577.49" x2="1787.42" y2="570.75" stroke="#888888" stroke-width="4.4"/>
<line x1="1746.98" y1="626.93" x2="1740.72" y2="615.54" stroke="#888888" stroke-width="4.4"/>
<text x="1619" y="612.5" font-size="13" fill="#888888" text-anchor="middle">0</text>
<text x="1579" y="566.5" font-size="13" fill="#888888" text-anchor="middle">2M</text>
<text x="1563.6" y="511.0" font-size="13" fill="#888888" text-anchor="middle">5M</text>
<text x="1578.4" y="454.2" font-size="13" fill="#888888" text-anchor="middle">8M</text>
<text x="1623" y="415.8" font-size="13" fill="#888888" text-anchor="middle">11M</text>
<text x="1677" y="401.5" font-size="13" fill="#888888" text-anchor="middle">14M</text>
<text x="1731.3" y="415.8" font-size="13" fill="#888888" text-anchor="middle">16M</text>
<text x="1771.8" y="456.4" font-size="13" fill="#888888" text-anchor="middle">19M</text>
<text x="1785.4" y="511.0" font-size="13" fill="#888888" text-anchor="middle">22M</text>
<text x="1770.5" y="565.2" font-size="13" fill="#888888" text-anchor="middle">25M</text>
<text x="1731.3" y="604.2" font-size="13" fill="#888888" text-anchor="middle">28M</text>
<path d="M1679.15 497.51 L1794.92 486.87 L1795.23 488.84 L1681.85 514.49 Z" fill="#3597db"/>
<circle cx="1680.5" cy="506" r="9" fill="#3597db"/>
<path d="M1598.00 1108.89 A165 165 0 1 1 1763.00 1108.89 L1749.75 1085.94 A138.5 138.5 0 1 0 1611.25 1085.94 Z" fill="#e6e9ea"/>
<path d="M1598.00 1108.89 A165 165 0 0 1 1685.39 801.07 L1684.61 827.56 A138.5 138.5 0 0 0 1611.25 1085.94 Z" fill="#3597db"/>
<line x1="1609.01" y1="1084.04" x2="1615.75" y2="1072.92" stroke="#888888" stroke-width="4.4"/>
<line x1="1559.57" y1="1032.48" x2="1570.96" y2="1026.22" stroke="#888888" stroke-width="4.4"/>
<line x1="1542.53" y1="963.11" x2="1555.53" y2="963.38" stroke="#888888" stroke-width="4.4"/>
<line x1="1562.46" y1="894.51" x2="1573.58" y2="901.25" stroke="#888888" stroke-width="4.4"/>
<line x1="1614.02" y1="845.07" x2="1620.28" y2="856.46" stroke="#888888" stroke-width="4.4"/>
<line x1="1683.39" y1="828.03" x2="1683.12" y2="841.03" stroke="#888888" stroke-width="4.4"/>
<line x1="1751.99" y1="847.96" x2="1745.25" y2="859.08" stroke="#888888" stroke-width="4.4"/>
<line x1="1801.43" y1="899.52" x2="1790.04" y2="905.78" stroke="#888888" stroke-width="4.4"/>
<line x1="1818.47" y1="968.89" x2="1805.47" y2="968.62" stroke="#888888" stroke-width="4.4"/>
<line x1="1798.54" y1="1037.49" x2="1787.42" y2="1030.75" stroke="#888888" stroke-width="4.4"/>
<line x1="1746.98" y1="1086.93" x2="1740.72" y2="1075.54" stroke="#888888" stroke-width="4.4"/>
<text x="1623" y="1067.0" font-size="13" fill="#888888" text-anchor="middle">-1M</text>
<text x="1582.5" y="1025.2" font-size="13" fill="#888888" text-anchor="middle">56M</text>
<text x="1572.5" y="970.5" font-size="13" fill="#888888" text-anchor="middle">114M</text>
<text x="1586.6" y="918.2" font-size="13" fill="#888888" text-anchor="middle">172M</text>
<text x="1624.4" y="879.1" font-size="13" fill="#888888" text-anchor="middle">229M</text>
<text x="1677" y="865.0" font-size="13" fill="#888888" text-anchor="middle">287M</text>
<text x="1729.4" y="879.1" font-size="13" fill="#888888" text-anchor="middle">345M</text>
<text x="1767.8" y="918.2" font-size="13" fill="#888888" text-anchor="middle">403M</text>
<text x="1781.3" y="970.5" font-size="13" fill="#888888" text-anchor="middle">460M</text>
<text x="1767.8" y="1023.8" font-size="13" fill="#888888" text-anchor="middle">518M</text>
<text x="1729.4" y="1061.6" font-size="13" fill="#888888" text-anchor="middle">576M</text>
<path d="M1671.90 965.85 L1681.52 850.00 L1683.52 850.04 L1689.10 966.15 Z" fill="#3597db"/>
<circle cx="1680.5" cy="966" r="9" fill="#3597db"/>
<rect x="272" y="1178" width="1620" height="22" fill="#fcfcfc"/>
<rect x="272.5" y="1183" width="1595.5" height="12.7" fill="#c1c1c1"/>
<path d="M265.5 1185.5 L265.5 1193 L261.5 1189.2 Z" fill="#777"/>
<path d="M1887.5 1186 L1887.5 1193 L1891.2 1189.5 Z" fill="#333"/>
<text x="948.5" y="1260" font-size="17" fill="#333333" text-anchor="middle" textLength="339" lengthAdjust="spacingAndGlyphs" stroke="#efefef" stroke-width="0.3">This is our standard Confidentiality Message.</text>
<text x="948.8" y="1281" font-size="17" fill="#333333" text-anchor="middle" textLength="552.5" lengthAdjust="spacingAndGlyphs" stroke="#efefef" stroke-width="0.3">All actions performed in this system will be logged for auditing purposes.</text>
<rect x="8.5" y="1293.5" width="1883" height="1" fill="#8e8e8e"/>
<text x="8.5" y="1321" font-size="17" fill="#333333" textLength="359.5" lengthAdjust="spacingAndGlyphs" stroke="#efefef" stroke-width="0.3">CobbleStone Software 2019 - Enterprise Edition</text>
<text x="1891" y="1321" font-size="17" fill="#333333" text-anchor="end" textLength="166" lengthAdjust="spacingAndGlyphs" stroke="#efefef" stroke-width="0.3">Version: 17.5.1.200129</text>
</svg>
</body></html>
